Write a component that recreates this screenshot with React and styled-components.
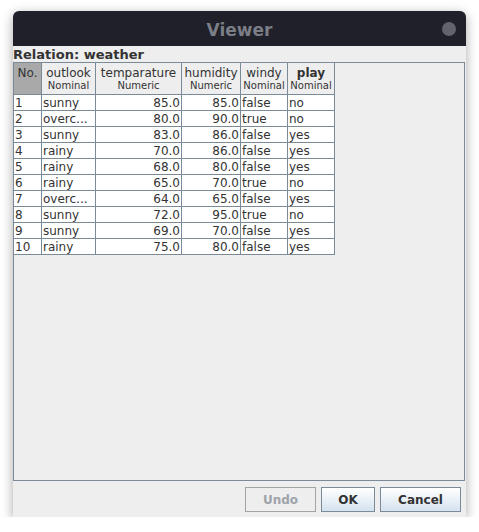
import React from "react";
import styled, { createGlobalStyle } from "styled-components";

const GlobalStyle = createGlobalStyle`
  html, body { margin: 0; padding: 0; background: #ffffff; }
  body { font-family: "DejaVu Sans", "Liberation Sans", sans-serif; }
`;

const columns = [
  { name: "outlook", type: "Nominal", width: 53, align: "left" },
  { name: "temparature", type: "Numeric", width: 85, align: "right" },
  { name: "humidity", type: "Numeric", width: 58, align: "right" },
  { name: "windy", type: "Nominal", width: 46, align: "left" },
  { name: "play", type: "Nominal", width: 46, align: "left", bold: true },
];

const rows = [
  ["sunny", "85.0", "85.0", "false", "no"],
  ["overc...", "80.0", "90.0", "true", "no"],
  ["sunny", "83.0", "86.0", "false", "yes"],
  ["rainy", "70.0", "86.0", "false", "yes"],
  ["rainy", "68.0", "80.0", "false", "yes"],
  ["rainy", "65.0", "70.0", "true", "no"],
  ["overc...", "64.0", "65.0", "false", "yes"],
  ["sunny", "72.0", "95.0", "true", "no"],
  ["sunny", "69.0", "70.0", "false", "yes"],
  ["rainy", "75.0", "80.0", "false", "yes"],
];

function Viewer() {
  return (
    <Window>
      <TitleBar>
        <Title>Viewer</Title>
        <CloseDot />
      </TitleBar>
      <Body>
        <Relation>Relation: weather</Relation>
        <ScrollPane>
          <Grid $cols={[27, ...columns.map((c) => c.width)]}>
            <IndexHead>No.</IndexHead>
            {columns.map((c) => (
              <HeadCell key={c.name}>
                <ColName $bold={c.bold}>{c.name}</ColName>
                <ColType>{c.type}</ColType>
              </HeadCell>
            ))}
            {rows.map((r, i) => (
              <React.Fragment key={i}>
                <Cell>{i + 1}</Cell>
                {r.map((v, j) => (
                  <Cell key={j} $align={columns[j].align}>
                    {v}
                  </Cell>
                ))}
              </React.Fragment>
            ))}
          </Grid>
        </ScrollPane>
        <ButtonRow>
          <Button disabled>Undo</Button>
          <Button $w={54}>OK</Button>
          <Button $w={81}>Cancel</Button>
        </ButtonRow>
      </Body>
    </Window>
  );
}

export default function App() {
  return (
    <>
      <GlobalStyle />
      <Viewer />
    </>
  );
}

const Window = styled.div`
  margin: 11px 0 0 13px;
  width: 453px;
  height: 506px;
  display: flex;
  flex-direction: column;
  border-radius: 6px 6px 0 0;
  overflow: hidden;
  background: #eeeeee;
  box-shadow: 0 3px 12px rgba(0, 0, 0, 0.35);
`;

const TitleBar = styled.div`
  position: relative;
  height: 35px;
  flex: none;
  background: #1f2029;
  display: flex;
  align-items: center;
  justify-content: center;
`;

const Title = styled.div`
  color: #7b7e86;
  font-weight: bold;
  font-size: 17px;
  margin-top: 2px;
`;

const CloseDot = styled.div`
  position: absolute;
  right: 10px;
  top: 11px;
  width: 14px;
  height: 14px;
  border-radius: 50%;
  background: #62636b;
`;

const Body = styled.div`
  flex: 1;
  display: flex;
  flex-direction: column;
  padding: 0 1px 0 0;
`;

const Relation = styled.div`
  height: 16px;
  line-height: 17px;
  font-size: 13px;
  font-weight: bold;
  color: #333333;
`;

const ScrollPane = styled.div`
  height: 417px;
  border: 1px solid #7a8a99;
  background: #eeeeee;
`;

const Grid = styled.div`
  display: grid;
  grid-template-columns: ${(p) => p.$cols.map((w) => `${w}px`).join(" ")};
  grid-template-rows: 31px;
  grid-auto-rows: 15px;
  gap: 1px;
  width: fit-content;
  background: #7a8a99;
  padding: 0 1px 1px 0;
`;

const IndexHead = styled.div`
  background: #a9a9a9;
  color: #333333;
  font-size: 12px;
  display: flex;
  align-items: flex-start;
  justify-content: center;
  padding-top: 3px;
`;

const HeadCell = styled.div`
  background: #eeeeee;
  display: flex;
  flex-direction: column;
  align-items: center;
  padding-top: 3px;
`;

const ColName = styled.div`
  font-size: 12px;
  line-height: 14px;
  color: #333333;
  font-weight: ${(p) => (p.$bold ? "bold" : "normal")};
`;

const ColType = styled.div`
  font-size: 10px;
  line-height: 12px;
  color: #333333;
`;

const Cell = styled.div`
  background: #ffffff;
  font-size: 12px;
  line-height: 16px;
  color: #333333;
  white-space: nowrap;
  overflow: hidden;
  text-align: ${(p) => p.$align || "left"};
  padding: 0 1px;
`;

const ButtonRow = styled.div`
  display: flex;
  justify-content: flex-end;
  gap: 5px;
  padding: 6px 4px 0 0;
`;

const Button = styled.button`
  width: ${(p) => p.$w || 71}px;
  height: 25px;
  font-family: "DejaVu Sans", "Liberation Sans", sans-serif;
  font-size: 12px;
  font-weight: bold;
  color: #333333;
  border: 1px solid #7a8a99;
  border-radius: 0;
  background: linear-gradient(#ffffff, #d5e2ef);
  padding: 0;
  &:disabled {
    color: #9ea3aa;
    border-color: #a3a3a3;
    background: #eeeeee;
  }
`;
